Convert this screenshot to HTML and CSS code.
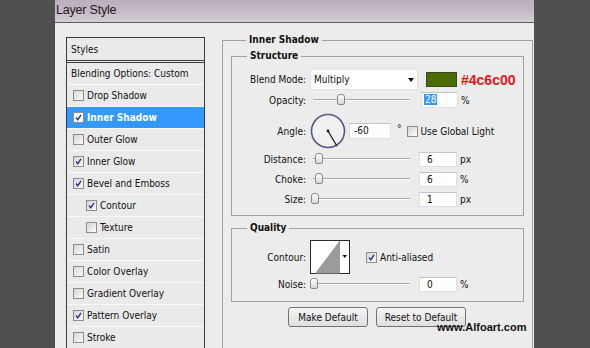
FILE: index.html
```html
<!DOCTYPE html>
<html>
<head>
    <title>Layer Style</title>
    <link rel="stylesheet" href="styles.css">
</head>
<body>
<div class="dialog">
    <div class="titlebar">Layer Style</div>
    <div class="dialog-body">
        <ul class="style-list">
            <li class="list-head">Styles</li>
            <li class="list-blend">Blending Options: Custom</li>
            <li><span class="check"></span>Drop Shadow</li>
            <li class="selected"><span class="check on"><svg viewBox="0 0 11 11"><path d="M2.5 5.5 L4.6 8.4 L8.6 2.2"/></svg></span>Inner Shadow</li>
            <li><span class="check"></span>Outer Glow</li>
            <li><span class="check on"><svg viewBox="0 0 11 11"><path d="M2.5 5.5 L4.6 8.4 L8.6 2.2"/></svg></span>Inner Glow</li>
            <li><span class="check on"><svg viewBox="0 0 11 11"><path d="M2.5 5.5 L4.6 8.4 L8.6 2.2"/></svg></span>Bevel and Emboss</li>
            <li class="sub"><span class="check on"><svg viewBox="0 0 11 11"><path d="M2.5 5.5 L4.6 8.4 L8.6 2.2"/></svg></span>Contour</li>
            <li class="sub"><span class="check"></span>Texture</li>
            <li><span class="check"></span>Satin</li>
            <li><span class="check"></span>Color Overlay</li>
            <li><span class="check"></span>Gradient Overlay</li>
            <li><span class="check on"><svg viewBox="0 0 11 11"><path d="M2.5 5.5 L4.6 8.4 L8.6 2.2"/></svg></span>Pattern Overlay</li>
            <li><span class="check"></span>Stroke</li>
        </ul>

        <div class="settings">
            <fieldset class="group outer">
                <legend>Inner Shadow</legend>

                <fieldset class="group structure">
                    <legend>Structure</legend>
                    <div class="row row-blend">
                        <label>Blend Mode:</label>
                        <div class="select">Multiply<span class="arrow"></span></div>
                        <span class="swatch"></span>
                        <span class="hex">#4c6c00</span>
                    </div>
                    <div class="row row-opacity">
                        <label>Opacity:</label>
                        <div class="slider"><span class="thumb" style="left: 27px"></span></div>
                        <span class="field field-wide"><span class="sel">28</span></span>
                        <span class="unit">%</span>
                    </div>
                    <div class="row row-angle">
                        <label>Angle:</label>
                        <svg class="dial" viewBox="0 0 36 36" width="36" height="36">
                            <circle cx="18" cy="18" r="16.5" fill="#f1f1f3" stroke="#565b84" stroke-width="1.6"/>
                            <line x1="18" y1="18" x2="27" y2="33.3" stroke="#111" stroke-width="1.2"/>
                            <circle cx="18" cy="18" r="1.4" fill="#111"/>
                        </svg>
                        <span class="field field-angle">-60</span>
                        <span class="degree">°</span>
                        <span class="check"></span>
                        <span class="check-label">Use Global Light</span>
                    </div>
                    <div class="row">
                        <label>Distance:</label>
                        <div class="slider"><span class="thumb" style="left: 5px"></span></div>
                        <span class="field">6</span>
                        <span class="unit">px</span>
                    </div>
                    <div class="row">
                        <label>Choke:</label>
                        <div class="slider"><span class="thumb" style="left: 5px"></span></div>
                        <span class="field">6</span>
                        <span class="unit">%</span>
                    </div>
                    <div class="row">
                        <label>Size:</label>
                        <div class="slider"><span class="thumb" style="left: 1px"></span></div>
                        <span class="field">1</span>
                        <span class="unit">px</span>
                    </div>
                </fieldset>

                <fieldset class="group quality">
                    <legend>Quality</legend>
                    <div class="row row-contour">
                        <label>Contour:</label>
                        <svg class="contour" viewBox="0 0 40 34" width="40" height="34">
                            <rect x="0.5" y="0.5" width="39" height="33" fill="#fff" stroke="#2a2a2a"/>
                            <polygon points="5,33.5 29.5,1 29.5,33.5" fill="#9b9b9b"/>
                            <line x1="29.5" y1="1" x2="29.5" y2="33" stroke="#9b9b9b"/>
                            <polygon points="32.5,15 37,15 34.75,18" fill="#111"/>
                        </svg>
                        <span class="check on"><svg viewBox="0 0 11 11"><path d="M2.5 5.5 L4.6 8.4 L8.6 2.2"/></svg></span>
                        <span class="check-label">Anti-aliased</span>
                    </div>
                    <div class="row">
                        <label>Noise:</label>
                        <div class="slider"><span class="thumb" style="left: 0px"></span></div>
                        <span class="field">0</span>
                        <span class="unit">%</span>
                    </div>
                </fieldset>

                <div class="buttons">
                    <button class="btn-make">Make Default</button>
                    <button class="btn-reset">Reset to Default</button>
                </div>
            </fieldset>
        </div>
    </div>
    <div class="watermark">www.Alfoart.com</div>
</div>
</body>
</html>
```

FILE: styles.css
```css
body {
    margin: 0;
    background-color: #505050;
    font-family: "DejaVu Sans Condensed", "DejaVu Sans", sans-serif;
    font-size: 10px;
    color: #111;
}
.dialog {
    position: relative;
    width: 479px;
    height: 348px;
    margin-left: 55px;
    background-color: #ececec;
    overflow: hidden;
}
.titlebar {
    height: 22px;
    padding-left: 1px;
    line-height: 20px;
    font-family: "Liberation Sans", sans-serif;
    font-size: 12.5px;
    letter-spacing: -0.2px;
    color: #1a1a1a;
    background: linear-gradient(180deg, #bcaebd 0%, #c7bbc8 55%, #d6cdd6 100%);
    border-bottom: 1px solid #5e5a60;
}
.dialog-body {
    display: flex;
    padding: 10px 0 0 11px;
}

/* styles list */
.style-list {
    list-style: none;
    margin: 4px 0 0 0;
    padding: 0;
    width: 139px;
    box-sizing: border-box;
    border: 1px solid #3a3a3a;
    border-bottom: none;
    background-color: #eaeaea;
}
.style-list li {
    display: flex;
    align-items: center;
    height: 21px;
    padding-left: 6px;
    border-bottom: 1px solid #f8f8f8;
    white-space: nowrap;
}
.style-list .list-head {
    height: 22px;
    padding-left: 4px;
    border-bottom: 3px double #3a3a3a;
}
.style-list .list-blend {
    padding-left: 4px;
}
.style-list .sub {
    padding-left: 19px;
}
.style-list .selected {
    background-color: #3399ff;
    color: #fff;
    font-weight: bold;
}

.check {
    display: inline-block;
    flex: none;
    width: 11px;
    height: 11px;
    box-sizing: border-box;
    margin-right: 3px;
    border: 1px solid #8d8d8d;
    background: linear-gradient(135deg, #d6d6d6, #fbfbfb);
}
.check svg {
    display: block;
    width: 9px;
    height: 9px;
}
.check svg path {
    fill: none;
    stroke: #26308a;
    stroke-width: 1.7;
}
.selected .check {
    background: #fff;
}

/* right side groups */
.settings {
    margin-left: 17px;
}
.group {
    margin: 0;
    padding: 0;
    border: 1px solid #a2a2a2;
    min-width: 0;
}
.group legend {
    margin-left: 15px;
    padding: 0 3px;
    height: 14px;
    line-height: 14px;
    font-weight: bold;
}
.outer {
    width: 311px;
    box-sizing: border-box;
    padding: 2px 8px 40px 8px;
}
.structure {
    padding: 6px 0 6px 0;
}
.quality {
    margin-top: 5px;
    padding: 5px 0 7px 0;
}

.row {
    display: flex;
    align-items: center;
    height: 20px;
    white-space: nowrap;
}
.row label {
    width: 74px;
    margin-right: 4px;
    text-align: right;
}
.row-blend {
    height: 21px;
}
.row-opacity {
    height: 16px;
    margin-top: 2px;
}
.row-angle {
    height: 36px;
    margin-top: 5px;
}
.row-contour {
    height: 34px;
}

.select {
    position: relative;
    width: 108px;
    height: 21px;
    box-sizing: border-box;
    padding-left: 3px;
    line-height: 20px;
    background-color: #fff;
    border: 1px solid #e2e2e2;
}
.select .arrow {
    position: absolute;
    right: 3px;
    top: 8px;
    border-left: 3.5px solid transparent;
    border-right: 3.5px solid transparent;
    border-top: 4px solid #111;
}
.swatch {
    width: 31px;
    height: 15px;
    margin-left: 8px;
    box-sizing: border-box;
    background-color: #4c6c00;
    border: 1px solid #3a4a20;
}
.hex {
    margin-left: 4px;
    font-family: "Liberation Sans", sans-serif;
    font-size: 14px;
    font-weight: bold;
    color: #e8141c;
}

.slider {
    position: relative;
    width: 104px;
    height: 16px;
    flex: none;
}
.slider::before {
    content: "";
    position: absolute;
    left: 3px;
    right: 4px;
    top: 7px;
    border-top: 1px solid #a9a9a9;
    border-bottom: 1px solid #fafafa;
}
.slider .thumb {
    position: absolute;
    top: 2px;
    width: 8px;
    height: 11px;
    box-sizing: border-box;
    border: 1px solid #8a8a8a;
    border-radius: 3px 3px 2px 2px;
    background: linear-gradient(180deg, #ffffff, #d8d8d8);
}

.field {
    width: 38px;
    height: 15px;
    box-sizing: border-box;
    margin-left: 5px;
    padding-left: 7px;
    line-height: 14px;
    background-color: #fff;
    border: 1px solid #e0e0e0;
    border-top-color: #c4c4c4;
}
.field-wide {
    width: 37px;
    height: 16px;
    margin-left: 7px;
    padding-left: 2px;
    line-height: 14px;
}
.field-wide .sel {
    background-color: #3399ff;
    color: #fff;
    padding: 0 1px;
}
.field-angle {
    width: 42px;
    height: 16px;
    margin-left: 3px;
    padding-left: 4px;
}
.unit {
    margin-left: 3px;
}
.degree {
    margin-left: 6px;
    margin-right: 5px;
    position: relative;
    top: -3px;
}
.dial {
    display: block;
    flex: none;
}
.check-label {
    margin-left: 0;
}
.contour {
    display: block;
    flex: none;
    margin-right: 16px;
}

.buttons {
    display: flex;
    gap: 8px;
    margin-top: 5px;
    padding-left: 57px;
}
.buttons button {
    height: 20px;
    padding: 0;
    font-family: inherit;
    font-size: 10px;
    color: #111;
    background: linear-gradient(180deg, #f6f6f6, #dedede);
    border: 1px solid #727272;
    border-radius: 3px;
}
.btn-make {
    width: 80px;
}
.btn-reset {
    width: 90px;
}

.watermark {
    position: absolute;
    left: 382px;
    top: 321px;
    font-family: "Liberation Sans", sans-serif;
    font-size: 11px;
    font-weight: bold;
    color: #111;
}
```
